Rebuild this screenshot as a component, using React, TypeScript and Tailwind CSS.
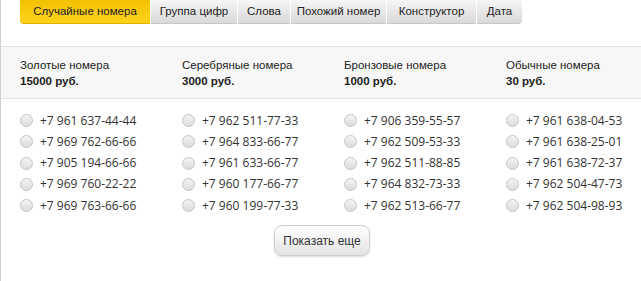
import React from 'react'

const tabs = ['Случайные номера', 'Группа цифр', 'Слова', 'Похожий номер', 'Конструктор', 'Дата']

const groups = [
  {
    title: 'Золотые номера',
    price: '15000 руб.',
    numbers: ['+7 961 637-44-44', '+7 969 762-66-66', '+7 905 194-66-66', '+7 969 760-22-22', '+7 969 763-66-66'],
  },
  {
    title: 'Серебряные номера',
    price: '3000 руб.',
    numbers: ['+7 962 511-77-33', '+7 964 833-66-77', '+7 961 633-66-77', '+7 960 177-66-77', '+7 960 199-77-33'],
  },
  {
    title: 'Бронзовые номера',
    price: '1000 руб.',
    numbers: ['+7 906 359-55-57', '+7 962 509-53-33', '+7 962 511-88-85', '+7 964 832-73-33', '+7 962 513-66-77'],
  },
  {
    title: 'Обычные номера',
    price: '30 руб.',
    numbers: ['+7 961 638-04-53', '+7 961 638-25-01', '+7 961 638-72-37', '+7 962 504-47-73', '+7 962 504-98-93'],
  },
]

const tabWidths = [130, 86, 52, 95, 89, 45]

function Radio() {
  return (
    <span className="w-[13px] h-[13px] rounded-full border border-[#c4c4c4] bg-gradient-to-b from-[#f4f4f4] to-[#dcdcdc] shrink-0" />
  )
}

export default function App() {
  return (
    <div className="w-[641px] h-[281px] bg-white border-l border-[#cfcfcf] overflow-hidden font-['Liberation_Sans',Arial,sans-serif] text-[#222]">
      {/* tabs */}
      <div className="flex pl-[19px] h-[46px] items-start">
        {tabs.map((t, i) => (
          <div
            key={t}
            className={
              i === 0
                ? 'h-[24px] shrink-0 flex items-center justify-center text-[11.5px] bg-gradient-to-b from-[#f2c200] to-[#ffd21a] rounded-bl-[4px] border-b border-[#e0b000]'
                : i === tabs.length - 1
                ? 'h-[24px] shrink-0 ml-px flex items-center justify-center text-[11.5px] bg-gradient-to-b from-[#f6f6f6] to-[#d9d9d9] rounded-br-[4px] border-b border-[#c8c8c8]'
                : 'h-[24px] shrink-0 ml-px flex items-center justify-center text-[11.5px] bg-gradient-to-b from-[#f6f6f6] to-[#d9d9d9] border-b border-[#c8c8c8]'
            }
            style={{ width: tabWidths[i] }}
          >
            {t}
          </div>
        ))}
      </div>

      {/* headers */}
      <div className="bg-[#f7f7f7] border-y border-[#e3e3e3] h-[53px] flex pl-[19px] pt-[10px]">
        {groups.map((g) => (
          <div key={g.title} className="w-[162px] shrink-0 text-[11.5px] leading-[16px]">
            <div>{g.title}</div>
            <div className="font-bold">{g.price}</div>
          </div>
        ))}
      </div>

      {/* numbers */}
      <div className="flex pl-[19px] pt-[11px]">
        {groups.map((g) => (
          <div key={g.title} className="w-[162px] shrink-0 flex flex-col">
            {g.numbers.map((n) => (
              <label key={n} className="h-[21.25px] flex items-center gap-[7px] font-['Open_Sans',sans-serif] text-[12px] text-[#333]">
                <Radio />
                <span>{n}</span>
              </label>
            ))}
          </div>
        ))}
      </div>

      <div className="flex justify-center pt-[9px] pl-[2px]">
        <button className="w-[96px] h-[31px] rounded-[8px] border border-[#cfcfcf] bg-gradient-to-b from-[#ffffff] to-[#e3e3e3] shadow-[0_1px_2px_rgba(0,0,0,0.15)] text-[12px] text-[#333]">
          Показать еще
        </button>
      </div>
    </div>
  )
}
